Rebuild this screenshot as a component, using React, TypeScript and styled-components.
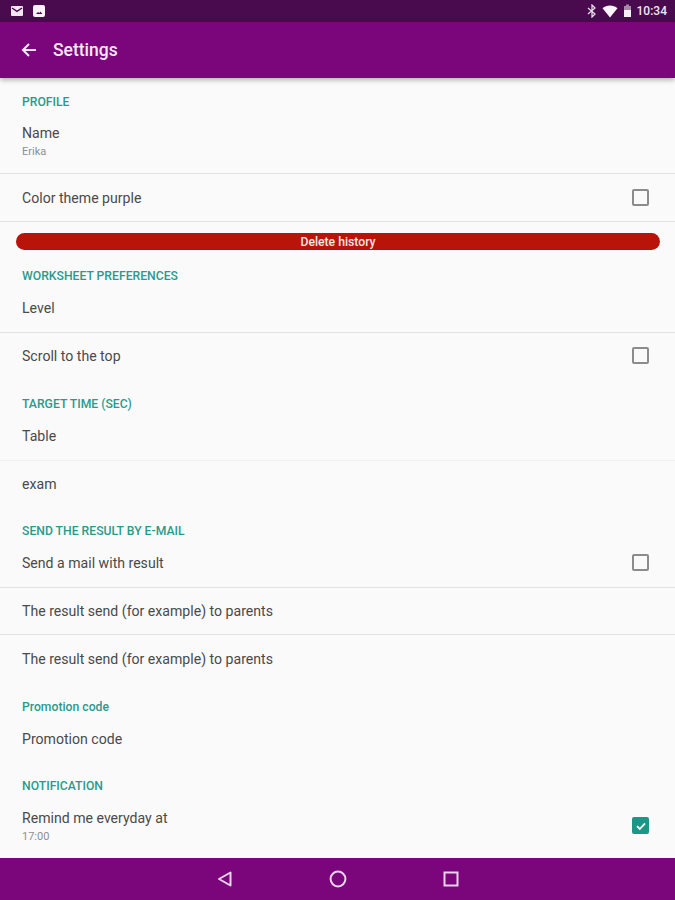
import styled, { createGlobalStyle } from "styled-components";

const GlobalStyle = createGlobalStyle`
    html, body {
        margin: 0;
        padding: 0;
        background: #fafafa;
    }
    * {
        box-sizing: border-box;
    }
`;

const App = () => {
    return (
        <Page>
            <GlobalStyle />
            <StatusBar>
                <StatusLeft>
                    <svg width="14" height="14" viewBox="0 0 14 14">
                        <rect x="1" y="2" width="12" height="10" rx="1" fill="#f3e6f3" />
                        <path d="M2 4l5 3.4L12 4" fill="none" stroke="#4a0a4e" strokeWidth="1.4" />
                    </svg>
                    <svg width="14" height="14" viewBox="0 0 14 14">
                        <rect x="1" y="1" width="12" height="12" rx="2" fill="#f8f2f8" />
                        <path d="M4 10l2-2 1.4 1 1-1.4L10.4 10z" fill="#4a0a4e" />
                    </svg>
                </StatusLeft>
                <StatusRight>
                    <svg width="10" height="14" viewBox="0 0 10 14">
                        <path d="M1 4l7 6-3 3V1l3 3-7 6" fill="none" stroke="#e6dbe8" strokeWidth="1.3" />
                    </svg>
                    <svg width="16" height="13" viewBox="0 0 16 13">
                        <path d="M0.5 3.2C4.8-0.4 11.2-0.4 15.5 3.2L8 12.5z" fill="#fbf6fb" />
                    </svg>
                    <svg width="9" height="14" viewBox="0 0 9 14">
                        <rect x="3" y="0.5" width="3" height="2" fill="#a58aa8" />
                        <rect x="1" y="2" width="7" height="11" fill="#a58aa8" />
                        <rect x="1" y="6" width="7" height="7" fill="#f6eff6" />
                    </svg>
                    <Clock>10:34</Clock>
                </StatusRight>
            </StatusBar>
            <AppBar>
                <svg width="16" height="16" viewBox="0 0 16 16">
                    <path d="M15 8H2M8 2L2 8l6 6" fill="none" stroke="#f6e8f6" strokeWidth="2" />
                </svg>
                <AppTitle>Settings</AppTitle>
            </AppBar>
            <Content>
                <SectionTitle $top={13}>PROFILE</SectionTitle>
                <Row $height={63} $divider>
                    <RowText>
                        <Label>Name</Label>
                        <SubLabel>Erika</SubLabel>
                    </RowText>
                </Row>
                <Row $divider $flush>
                    <Label>Color theme purple</Label>
                    <CheckBox />
                </Row>
                <DeleteButton>Delete history</DeleteButton>
                <SectionTitle $top={15}>WORKSHEET PREFERENCES</SectionTitle>
                <Row $divider>
                    <Label>Level</Label>
                </Row>
                <Row>
                    <Label>Scroll to the top</Label>
                    <CheckBox />
                </Row>
                <SectionTitle $top={12}>TARGET TIME (SEC)</SectionTitle>
                <Row $divider $light>
                    <Label>Table</Label>
                </Row>
                <Row>
                    <Label>exam</Label>
                </Row>
                <SectionTitle $top={12} $height={19}>SEND THE RESULT BY E-MAIL</SectionTitle>
                <Row $divider>
                    <Label>Send a mail with result</Label>
                    <CheckBox />
                </Row>
                <Row $height={47} $divider $flush>
                    <Label>The result send (for example) to parents</Label>
                </Row>
                <Row $height={49} $flush>
                    <Label>The result send (for example) to parents</Label>
                </Row>
                <SectionTitle $top={12}>Promotion code</SectionTitle>
                <Row>
                    <Label>Promotion code</Label>
                </Row>
                <SectionTitle $top={11}>NOTIFICATION</SectionTitle>
                <Row $height={66}>
                    <RowText>
                        <Label>Remind me everyday at</Label>
                        <SubLabel>17:00</SubLabel>
                    </RowText>
                    <CheckBox $checked>
                        <svg width="12" height="12" viewBox="0 0 12 12">
                            <path d="M2 6.2l2.8 2.8L10 3.4" fill="none" stroke="#fff" strokeWidth="1.8" />
                        </svg>
                    </CheckBox>
                </Row>
            </Content>
            <NavBar>
                <svg width="18" height="18" viewBox="0 0 18 18">
                    <path d="M14.5 2.5v13L3 9z" fill="none" stroke="#ecd3ec" strokeWidth="2" strokeLinejoin="round" />
                </svg>
                <svg width="18" height="18" viewBox="0 0 18 18">
                    <circle cx="9" cy="9" r="7.4" fill="none" stroke="#ecd3ec" strokeWidth="2" />
                </svg>
                <svg width="18" height="18" viewBox="0 0 18 18">
                    <rect x="2.5" y="2.5" width="13" height="13" fill="none" stroke="#ecd3ec" strokeWidth="2" />
                </svg>
            </NavBar>
        </Page>
    );
};

export default App;

const Page = styled.div`
    width: 675px;
    height: 900px;
    display: flex;
    flex-direction: column;
    overflow: hidden;
    background: #fafafa;
    font-family: Roboto, "Liberation Sans", sans-serif;
`;

const StatusBar = styled.div`
    height: 22px;
    flex-shrink: 0;
    display: flex;
    align-items: center;
    justify-content: space-between;
    padding: 0 8px 0 10px;
    background: #4a0a4e;
`;

const StatusLeft = styled.div`
    display: flex;
    align-items: center;
    gap: 8px;
`;

const StatusRight = styled.div`
    display: flex;
    align-items: center;
    gap: 5px;
`;

const Clock = styled.span`
    font-size: 12px;
    font-weight: 500;
    color: #f0e6f0;
`;

const AppBar = styled.header`
    height: 56px;
    flex-shrink: 0;
    display: flex;
    align-items: center;
    gap: 16px;
    padding: 0 0 0 21px;
    background: #7b067b;
    box-shadow: 0 2px 5px rgba(0, 0, 0, 0.3);
    position: relative;
`;

const AppTitle = styled.h1`
    margin: 0;
    font-size: 17.5px;
    font-weight: 500;
    color: #f6e8f6;
`;

const Content = styled.main`
    flex: 1;
    min-height: 0;
    overflow: hidden;
    display: flex;
    flex-direction: column;
`;

const SectionTitle = styled.div<{ $top: number; $height?: number }>`
    height: ${(props) => props.$height ?? 20}px;
    flex-shrink: 0;
    margin-top: ${(props) => props.$top}px;
    padding: 1px 22px 0;
    display: flex;
    align-items: center;
    font-size: 12.2px;
    font-weight: 500;
    color: #2a9a8c;
`;

const Row = styled.div<{ $height?: number; $divider?: boolean; $light?: boolean; $flush?: boolean }>`
    height: ${(props) => props.$height ?? 48}px;
    flex-shrink: 0;
    display: flex;
    align-items: center;
    justify-content: space-between;
    padding: 0 26px ${(props) => (props.$flush ? "0" : "2px")} 22px;
    border-bottom: 1px solid
        ${(props) => (props.$divider ? (props.$light ? "#f1f1f1" : "#e3e3e3") : "transparent")};
`;

const RowText = styled.div`
    display: flex;
    flex-direction: column;
    gap: 4px;
`;

const Label = styled.span`
    font-size: 14.1px;
    color: #4a4a4a;
`;

const SubLabel = styled.span`
    font-size: 11px;
    color: #8f8f8f;
`;

const CheckBox = styled.span<{ $checked?: boolean }>`
    width: 17px;
    height: 17px;
    display: flex;
    align-items: center;
    justify-content: center;
    border-radius: 2px;
    border: ${(props) => (props.$checked ? "none" : "2px solid #8c8c8c")};
    background: ${(props) => (props.$checked ? "#1d9587" : "transparent")};
    margin-bottom: ${(props) => (props.$checked ? "2px" : "0")};
`;

const DeleteButton = styled.button`
    height: 17px;
    flex-shrink: 0;
    margin: 11px 15px 0 16px;
    padding: 0;
    border: none;
    border-radius: 9px;
    background: #b8140a;
    font-family: Roboto, "Liberation Sans", sans-serif;
    font-size: 12.2px;
    font-weight: 500;
    color: #f8e8e6;
`;

const NavBar = styled.nav`
    height: 42px;
    flex-shrink: 0;
    display: flex;
    align-items: center;
    padding-left: 216px;
    gap: 95px;
    background: #7b067b;
`;
